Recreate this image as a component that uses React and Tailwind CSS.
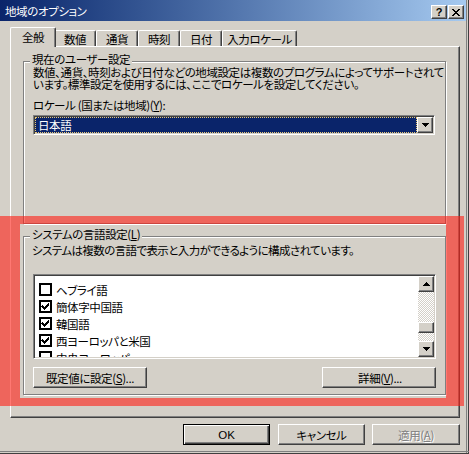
import React from "react";

const raised =
  "border border-t-white border-l-white border-r-[#404040] border-b-[#404040] shadow-[inset_-1px_-1px_0_#808080]";
const sunken =
  "border border-t-[#808080] border-l-[#808080] border-r-white border-b-white shadow-[inset_1px_1px_0_#404040,inset_-1px_-1px_0_#d4d0c8]";

function U({ children }) {
  return <span className="underline underline-offset-[1px]">{children}</span>;
}

function Arrow({ up }) {
  return (
    <svg width="7" height="4" viewBox="0 0 7 4" shapeRendering="crispEdges">
      {up ? (
        <polygon points="3.5,0 7,4 0,4" fill="#000" />
      ) : (
        <polygon points="0,0 7,0 3.5,4" fill="#000" />
      )}
    </svg>
  );
}

function Check({ checked }) {
  return (
    <div className="w-[13px] h-[13px] border-2 border-black bg-white flex items-center justify-center">
      {checked && (
        <svg width="9" height="9" viewBox="0 0 9 9" shapeRendering="crispEdges">
          <path d="M1 3h1v1h1v1h1v-1h1v-1h1v-1h1v-1h1v3h-1v1h-1v1h-1v1h-1v1h-1v-1h-1v-1h-1v-1h-1z" fill="#000" />
        </svg>
      )}
    </div>
  );
}

function GroupBox({ label, className, children }) {
  return (
    <div
      className={
        "relative border border-[#808080] shadow-[inset_1px_1px_0_#fff,1px_1px_0_#fff] " +
        className
      }
    >
      <div className="absolute left-[6px] top-[-9px] px-[2px] bg-[#d4d0c8] leading-[12px] h-[13px] whitespace-nowrap">
        {label}
      </div>
      {children}
    </div>
  );
}

function Tab({ children, selected, w }) {
  if (selected) {
    return (
      <div
        className={
          "relative z-10 h-[20px] -mb-[1px] -mx-[2px] bg-[#d4d0c8] border-l border-t border-t-white border-l-white border-r border-r-[#404040] shadow-[inset_-1px_0_0_#808080] rounded-tl-[2px] rounded-tr-[2px] flex justify-center pt-[3px] leading-[12px] whitespace-nowrap " +
          w
        }
      >
        {children}
      </div>
    );
  }
  return (
    <div
      className={
        "h-[16px] border-l border-t border-t-white border-l-white border-r border-r-[#404040] shadow-[inset_-1px_0_0_#808080] rounded-tl-[2px] rounded-tr-[2px] flex justify-center pt-[2px] leading-[12px] whitespace-nowrap " +
        w
      }
    >
      {children}
    </div>
  );
}

function Btn({ children, className = "" }) {
  return (
    <div
      className={
        "h-[21px] flex items-center justify-center leading-[12px] whitespace-nowrap " + raised + " " + className
      }
    >
      {children}
    </div>
  );
}

const items = [
  ["ヘブライ語", false],
  ["簡体字中国語", true],
  ["韓国語", true],
  ["西ヨーロッパと米国", true],
  ["中央ヨーロッパ", false],
];

export default function App() {
  return (
    <div className="relative w-[469px] h-[454px] bg-[#d4d0c8] overflow-hidden text-black text-[11.5px] tracking-[-0.4px] font-['Noto_Sans_CJK_JP',sans-serif] [font-feature-settings:'palt']">
      {/* window frame right/bottom */}
      <div className="absolute right-0 top-0 bottom-0 w-[3px] border-l border-l-[#808080] border-r border-r-[#404040]" />
      <div className="absolute left-0 right-0 bottom-0 h-[3px] border-t border-t-[#808080] border-b border-b-[#404040]" />

      {/* title bar */}
      <div className="w-[466px] h-[21px] bg-gradient-to-r from-[#0a246a] to-[#a6caf0] flex items-start">
        <div className="text-white leading-[12px] pl-[5px] pt-[5px] whitespace-nowrap">地域のオプション</div>
        <div className="ml-auto flex mt-[5px] mr-[2px] gap-[1px]">
          <div className={"w-[16px] h-[14px] bg-[#d4d0c8] flex items-center justify-center font-['Liberation_Sans'] font-bold text-[11px] leading-[11px] tracking-normal " + raised}>
            ?
          </div>
          <div className={"w-[16px] h-[14px] bg-[#d4d0c8] flex items-center justify-center " + raised}>
            <svg width="8" height="7" viewBox="0 0 8 7" shapeRendering="crispEdges">
              <path d="M0 0h2v1h1v1h2v-1h1v-1h2v1h-1v1h-1v1h-1v1h1v1h1v1h1v1h-2v-1h-1v-1h-2v1h-1v1h-2v-1h1v-1h1v-1h1v-1h-1v-1h-1z" fill="#000" />
            </svg>
          </div>
        </div>
      </div>

      {/* tabs */}
      <div className="flex items-end h-[19px] mt-[6px] ml-[12px]">
        <Tab selected w="w-[46px]">全般</Tab>
        <Tab w="w-[42px]">数値</Tab>
        <Tab w="w-[42px]">通貨</Tab>
        <Tab w="w-[42px]">時刻</Tab>
        <Tab w="w-[42px]">日付</Tab>
        <Tab w="w-[75px]">入力ロケール</Tab>
      </div>

      {/* tab panel */}
      <div className="ml-[10px] w-[450px] h-[372px] border border-t-white border-l-white border-r-[#404040] border-b-[#404040] shadow-[inset_-1px_-1px_0_#808080] flex flex-col">
        <GroupBox label="現在のユーザー設定" className="ml-[12px] mt-[14px] w-[423px] h-[163px] flex flex-col">
          <div className="pl-[9px] mt-[4px] leading-[12px] whitespace-nowrap">
            <div>数値、通貨、時刻および日付などの地域設定は複数のプログラムによってサポートされて</div>
            <div>います。標準設定を使用するには、ここでロケールを設定してください。</div>
          </div>
          <div className="pl-[9px] mt-[9px] leading-[12px] whitespace-nowrap">
            ロケール (国または地域)(<U>Y</U>):
          </div>
          <div className={"ml-[9px] mt-[4px] w-[402px] h-[20px] p-[1px] flex " + sunken}>
            <div className="flex-1 h-[16px] bg-[#0a246a] border border-dotted border-[#e8c878] text-white leading-[12px] pl-[2px] pt-[1px]">
              日本語
            </div>
            <div className={"w-[16px] h-[16px] bg-[#d4d0c8] flex items-center justify-center " + raised}>
              <Arrow />
            </div>
          </div>
        </GroupBox>

        <GroupBox label={<>システムの言語設定(<U>L</U>)</>} className="ml-[12px] mt-[12px] w-[423px] h-[159px] flex flex-col">
          <div className="pl-[8px] mt-[7px] leading-[12px] whitespace-nowrap tracking-[-0.6px]">
            システムは複数の言語で表示と入力ができるように構成されています。
          </div>
          <div className={"ml-[9px] mt-[18px] w-[403px] h-[85px] p-[1px] flex bg-white " + sunken}>
            <div className="flex-1 overflow-hidden flex flex-col pt-[7px] pl-[4px]">
              {items.map(([t, c]) => (
                <div key={t} className="h-[17px] shrink-0 flex items-start gap-[4px]">
                  <Check checked={c} />
                  <span className="leading-[12px] mt-[1px] whitespace-nowrap">{t}</span>
                </div>
              ))}
            </div>
            <div className="w-[16px] h-[81px] flex flex-col">
              <div className={"w-[16px] h-[16px] bg-[#d4d0c8] flex items-center justify-center " + raised}>
                <Arrow up />
              </div>
              <div className="flex-1 flex flex-col bg-[repeating-conic-gradient(#d4d0c8_0_25%,#ffffff_0_50%)] bg-size-[2px_2px]">
                <div className="h-[30px]" />
                <div className={"w-[16px] h-[11px] bg-[#d4d0c8] " + raised} />
              </div>
              <div className={"w-[16px] h-[16px] bg-[#d4d0c8] flex items-center justify-center " + raised}>
                <Arrow />
              </div>
            </div>
          </div>
          <div className="flex ml-[9px] mt-[8px] w-[403px] justify-between">
            <Btn className="w-[114px]">既定値に設定(<U>S</U>)...</Btn>
            <Btn className="w-[114px] pl-[2px]">詳細(<U>V</U>)...</Btn>
          </div>
        </GroupBox>
      </div>

      {/* bottom buttons */}
      <div className="flex ml-[183px] mt-[6px] gap-[8px]">
        <div className="w-[87px] h-[21px] border border-black flex items-center justify-center leading-[12px] shadow-[inset_1px_1px_0_#fff,inset_-1px_-1px_0_#404040,inset_-2px_-2px_0_#808080] font-['Liberation_Sans'] tracking-normal">
          OK
        </div>
        <Btn className="w-[87px]">キャンセル</Btn>
        <Btn className="w-[88px] -ml-[1px] text-[#808080] [text-shadow:1px_1px_0_#fff]">
          適用(<U>A</U>)
        </Btn>
      </div>

      {/* red highlight overlay */}
      <div className="absolute left-0 top-[216px] w-[464px] h-[190px] border-l-[20px] border-t-[8px] border-r-[18px] border-b-[8px] border-[rgba(255,30,20,0.6)]" />
    </div>
  );
}
